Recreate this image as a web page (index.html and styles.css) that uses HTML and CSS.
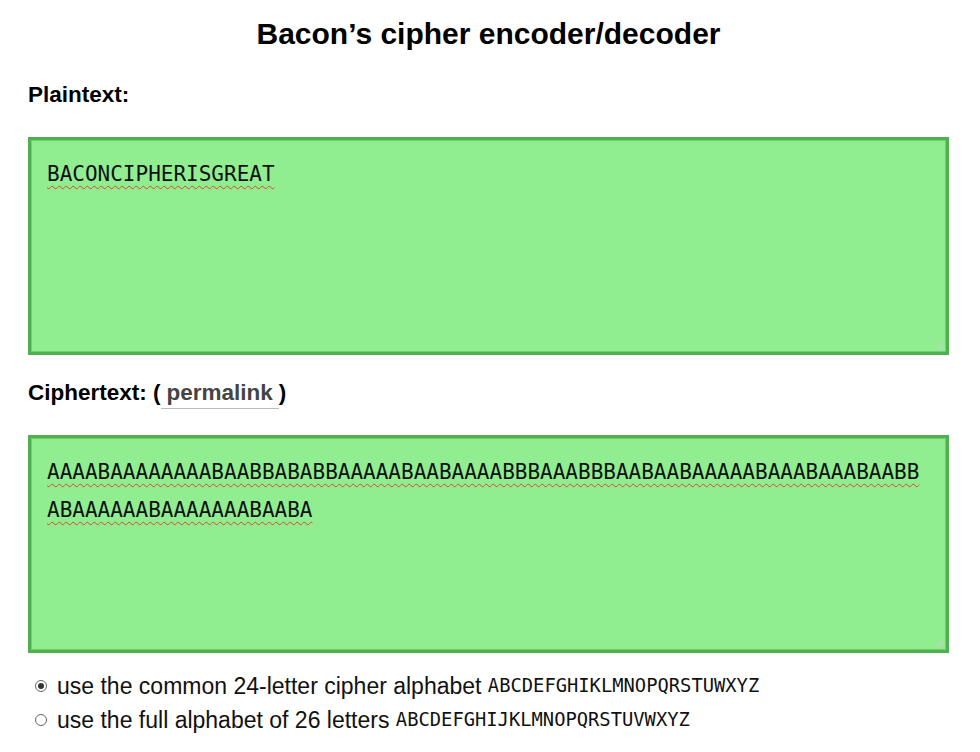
FILE: index.html
```html
<!DOCTYPE html>
<html lang="en">
<head>
<meta charset="utf-8">
<title>Bacon’s cipher encoder/decoder</title>
<link rel="stylesheet" href="styles.css">
</head>
<body>
<main class="page">
  <h1 class="title">Bacon’s cipher encoder/decoder</h1>

  <label class="label">Plaintext:</label>
  <div class="area">
    <span class="spell">BACONCIPHERISGREAT</span>
    <svg class="grip" width="10" height="10" viewBox="0 0 10 10"><path d="M9 3L3 9M9 6L6 9" stroke="#b9d9b9" stroke-width="1.5"/></svg>
  </div>

  <label class="label">Ciphertext: (<a class="permalink" href="#">permalink</a>)</label>
  <div class="area">
    <span class="spell">AAAABAAAAAAAABAABBABABBAAAAABAABAAAABBBAAABBBAABAABAAAAABAAABAAABAABBABAAAAAABAAAAAAABAABA</span>
    <svg class="grip" width="10" height="10" viewBox="0 0 10 10"><path d="M9 3L3 9M9 6L6 9" stroke="#b9d9b9" stroke-width="1.5"/></svg>
  </div>

  <div class="options">
    <div class="option"><span class="radio checked"></span>use the common 24-letter cipher alphabet <code class="alpha">ABCDEFGHIKLMNOPQRSTUWXYZ</code></div>
    <div class="option"><span class="radio"></span>use the full alphabet of 26 letters <code class="alpha">ABCDEFGHIJKLMNOPQRSTUVWXYZ</code></div>
  </div>
</main>
</body>
</html>
```

FILE: styles.css
```css
html, body {
  margin: 0;
  padding: 0;
  background: #fff;
}

body {
  font-family: "Liberation Sans", Arial, sans-serif;
  color: #000;
}

.page {
  width: 921px;
  margin-left: 28px;
  padding-top: 16px;
  display: flex;
  flex-direction: column;
}

.title {
  margin: 0 0 30px;
  font-size: 30px;
  line-height: 36px;
  font-weight: bold;
  text-align: center;
}

.label {
  display: block;
  font-size: 22.5px;
  line-height: 26px;
  font-weight: bold;
  margin-bottom: 29px;
}

.area + .label {
  margin-top: 25px;
}

.permalink {
  color: #444;
  text-decoration: none;
  padding: 0 6px 3px;
  border-bottom: 1px solid #bbb;
}

.area {
  position: relative;
  box-sizing: border-box;
  height: 218px;
  background: #90ee90;
  border: 3px solid #4fb04f;
  box-shadow: inset 0 0 0 1px #6fcf6f;
  padding: 15px 16px;
  font-family: "DejaVu Sans Mono", monospace;
  font-size: 21px;
  line-height: 38px;
  word-break: break-all;
  color: #111;
}

.spell {
  text-decoration: underline wavy #e0452d;
  text-decoration-thickness: 1px;
  text-underline-offset: 4px;
}

.grip {
  position: absolute;
  right: 2px;
  bottom: 2px;
}

.options {
  margin-top: 16px;
  display: flex;
  flex-direction: column;
}

.option {
  display: flex;
  align-items: center;
  font-size: 23px;
  line-height: 34px;
  color: #111;
  white-space: pre;
}

.radio {
  box-sizing: border-box;
  width: 12px;
  height: 12px;
  border: 1px solid #666;
  border-radius: 50%;
  margin: 0 10px 0 7px;
  position: relative;
  flex: none;
}

.radio.checked::after {
  content: "";
  position: absolute;
  left: 2px;
  top: 2px;
  width: 6px;
  height: 6px;
  border-radius: 50%;
  background: #333;
}

.alpha {
  font-family: "DejaVu Sans Mono", monospace;
  font-size: 18.8px;
}
```
